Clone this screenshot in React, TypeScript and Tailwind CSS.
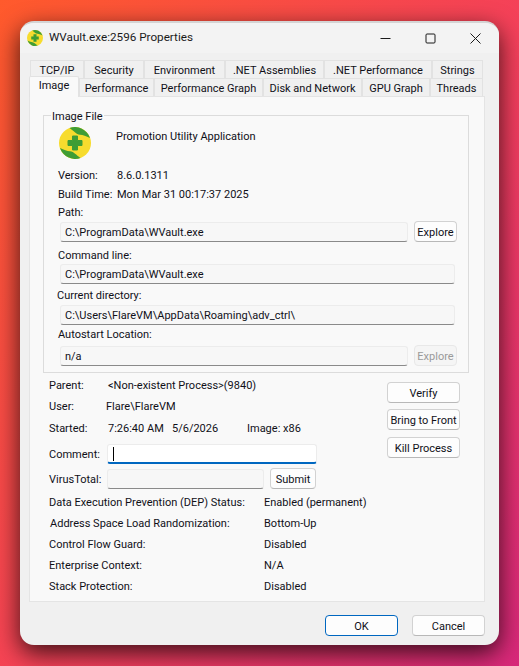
import React from 'react'

const row1 = [
  { label: 'TCP/IP', w: 'w-[54px]' },
  { label: 'Security', w: 'w-[60px]' },
  { label: 'Environment', w: 'w-[81px]' },
  { label: '.NET Assemblies', w: 'w-[99px]' },
  { label: '.NET Performance', w: 'w-[108px]' },
  { label: 'Strings', w: 'w-[51px]' },
]

const row2 = [
  { label: 'Performance', w: 'w-[75px]' },
  { label: 'Performance Graph', w: 'w-[109px]' },
  { label: 'Disk and Network', w: 'w-[99px]' },
  { label: 'GPU Graph', w: 'w-[68px]' },
  { label: 'Threads', w: 'w-[53px]' },
]

const mitigations = [
  { label: 'Data Execution Prevention (DEP) Status:', value: 'Enabled (permanent)', cls: 'w-[215px]' },
  { label: 'Address Space Load Randomization:', value: 'Bottom-Up', cls: 'w-[214px] ml-px' },
  { label: 'Control Flow Guard:', value: 'Disabled', cls: 'w-[215px]' },
  { label: 'Enterprise Context:', value: 'N/A', cls: 'w-[215px]' },
  { label: 'Stack Protection:', value: 'Disabled', cls: 'w-[215px]' },
]

function AppIcon({ size }: { size: number }) {
  return (
    <svg width={size} height={size} viewBox="0 0 32 32">
      <circle cx="16" cy="16" r="16" fill="#f7dc2e" />
      <path d="M10.5 1A16 16 0 0 1 31 11C27 9 24 8 21 7.7C17 7.3 15 4 10.5 1Z" fill="#3f9d35" />
      <path d="M21.5 31A16 16 0 0 1 1 21C5 23 8 24 11 24.3C15 24.7 17 28 21.5 31Z" fill="#3f9d35" />
      <path d="M13.5 9H18.5V13.5H23V18.5H18.5V23H13.5V18.5H9V13.5H13.5Z" fill="#3f9d35" stroke="#3f9d35" strokeLinejoin="round" />
    </svg>
  )
}

function Field({ value, width }: { value: string; width: string }) {
  return (
    <div className={`${width} h-[20px] ml-[2px] shrink-0 bg-[#f7f7f7] border border-[#ececec] border-b-[#8a8a8a] rounded-[3px] pl-[4px] leading-[20px] whitespace-nowrap`}>
      {value}
    </div>
  )
}

function Btn({ label, width, disabled }: { label: string; width: string; disabled?: boolean }) {
  return (
    <div className={`${width} h-[21px] pt-[3px] shrink-0 flex items-center justify-center rounded-[4px] border whitespace-nowrap ${disabled ? 'bg-[#f5f5f5] border-[#e8e8e8] text-[#9a9a9a]' : 'bg-[#fdfdfd] border-[#d2d2d2] border-b-[#b8b8b8]'}`}>
      {label}
    </div>
  )
}

export default function App() {
  return (
    <div className="w-[519px] h-[666px] overflow-hidden pt-[21px] pl-[20px] bg-[linear-gradient(125deg,#ff5a2c_0%,#f4405a_55%,#d8287a_100%)] font-['Roboto','Open_Sans',sans-serif] text-[11px] text-[#101018]">
      <div className="w-[479px] h-[624px] rounded-[14px] bg-[#f0f0f0] border-t-2 border-[#d4d4d4] shadow-[0_8px_24px_rgba(0,0,0,0.75)] overflow-hidden">
        {/* Title bar */}
        <div className="h-[30px] flex items-center pl-[7px] bg-[#f3f3f3]">
          <AppIcon size={16} />
          <span className="ml-[6px] text-[11.7px] text-[#1a1a1a] -mt-[1px]">WVault.exe:2596 Properties</span>
          <div className="ml-auto flex items-center gap-[34px] pr-[18px] text-[#1a1a1a]">
            <svg width="11" height="11" viewBox="0 0 11 11"><path d="M0.5 5.5H10.5" stroke="currentColor" /></svg>
            <svg width="11" height="11" viewBox="0 0 11 11"><rect x="1" y="1" width="9" height="9" rx="1" fill="none" stroke="currentColor" /></svg>
            <svg width="11" height="11" viewBox="0 0 11 11"><path d="M0.5 0.5L10.5 10.5M10.5 0.5L0.5 10.5" stroke="currentColor" /></svg>
          </div>
        </div>

        <div className="pl-[9px] pt-[7px]">
          {/* Tabs */}
          <div className="flex pl-px h-[18px]">
            {row1.map(t => (
              <div key={t.label} className={`${t.w} h-[18px] pt-[3px] flex items-center justify-center bg-[#f0f0f0] border border-b-0 border-[#e2e2e2] whitespace-nowrap`}>
                {t.label}
              </div>
            ))}
          </div>
          <div className="flex h-[18px] items-end">
            <div className="w-[50px] h-[21px] -mt-[3px] pb-[1px] flex items-center justify-center bg-[#f9f9f9] border border-b-0 border-[#e2e2e2] rounded-t-[2px] relative z-10 -mb-px">
              Image
            </div>
            {row2.map(t => (
              <div key={t.label} className={`${t.w} h-[18px] pt-[3px] flex items-center justify-center bg-[#f0f0f0] border border-b-0 border-[#e2e2e2] whitespace-nowrap`}>
                {t.label}
              </div>
            ))}
          </div>

          {/* Page */}
          <div className="w-[456px] h-[506px] bg-[#f9f9f9] border border-[#e4e4e4] pl-[13px] pt-[18px]">
            <div className="relative w-[426px] h-[258px] border border-[#dcdcdc] pl-[14px]">
              <span className="absolute left-[7px] -top-[6px] px-[1px] bg-[#f9f9f9] leading-[14px]">Image File</span>
              <div className="flex h-[44px] pt-[11px]">
                <div className="ml-px"><AppIcon size={32} /></div>
                <span className="ml-[25px] mt-[2px] leading-[16px]">Promotion Utility Application</span>
              </div>
              <div className="flex h-[19px] mt-[5px] pt-[4px] items-center"><span className="w-[59px] shrink-0 whitespace-nowrap">Version:</span><span>8.6.0.1311</span></div>
              <div className="flex h-[19px] pt-[4px] items-center"><span className="w-[59px] shrink-0 whitespace-nowrap">Build Time:</span><span>Mon Mar 31 00:17:37 2025</span></div>
              <div className="h-[16px] leading-[18px] mt-[1px]">Path:</div>
              <div className="flex h-[21px] items-center gap-[6px] mt-[1px]">
                <Field value="C:\ProgramData\WVault.exe" width="w-[348px]" />
                <Btn label="Explore" width="w-[43px]" />
              </div>
              <div className="h-[16px] leading-[18px] mt-[5px]">Command line:</div>
              <div className="mt-px"><Field value="C:\ProgramData\WVault.exe" width="w-[395px]" /></div>
              <div className="h-[16px] leading-[18px] mt-[3px] -ml-px">Current directory:</div>
              <div className="mt-[2px]"><Field value="C:\Users\FlareVM\AppData\Roaming\adv_ctrl\" width="w-[395px]" /></div>
              <div className="h-[16px] leading-[18px] mt-[1px]">Autostart Location:</div>
              <div className="flex h-[21px] items-center gap-[6px] mt-[3px]">
                <Field value="n/a" width="w-[348px]" />
                <Btn label="Explore" width="w-[43px]" disabled />
              </div>
            </div>

            {/* Process details */}
            <div className="flex mt-[1px] ml-[6px] h-[224px]">
              <div className="w-[338px]">
                <div className="flex h-[21px] pt-[4px] items-center"><span className="w-[59px]">Parent:</span><span>&lt;Non-existent Process&gt;(9840)</span></div>
                <div className="flex h-[21px] pt-[4px] items-center"><span className="w-[57px]">User:</span><span>Flare\FlareVM</span></div>
                <div className="flex h-[22px] mt-px pt-[2px] items-center">
                  <span className="w-[59px]">Started:</span>
                  <span className="w-[64px]">7:26:40 AM</span>
                  <span className="w-[75px]">5/6/2026</span>
                  <span>Image: x86</span>
                </div>
                <div className="flex h-[20px] mt-[5px] items-center">
                  <span className="w-[58px] mt-[2px]">Comment:</span>
                  <div className="w-[210px] h-[20px] bg-white border border-[#ececec] border-b-2 border-b-[#0067c0] rounded-[3px] flex items-center pl-[5px]">
                    <div className="w-px h-[14px] bg-black" />
                  </div>
                </div>
                <div className="flex h-[21px] mt-[4px] items-center">
                  <span className="w-[58px] mt-[4px]">VirusTotal:</span>
                  <div className="w-[157px] h-[20px] bg-[#f7f7f7] border border-[#ececec] border-b-[#8a8a8a] rounded-[3px]" />
                  <div className="ml-[6px]"><Btn label="Submit" width="w-[46px]" /></div>
                </div>
                <div className="mt-[2px]">
                  {mitigations.map(m => (
                    <div key={m.label} className="flex h-[21px] pt-[4px] items-center">
                      <span className={`shrink-0 whitespace-nowrap ${m.cls}`}>{m.label}</span>
                      <span className="whitespace-nowrap">{m.value}</span>
                    </div>
                  ))}
                </div>
              </div>
              <div className="flex flex-col mt-[8px]">
                <Btn label="Verify" width="w-[73px]" />
                <div className="mt-[6px]"><Btn label="Bring to Front" width="w-[73px]" /></div>
                <div className="mt-[7px]"><Btn label="Kill Process" width="w-[73px]" /></div>
              </div>
            </div>
          </div>

          {/* Dialog buttons */}
          <div className="flex justify-end gap-[14px] mt-[13px] pr-[14px]">
            <div className="w-[73px] h-[21px] pt-[3px] flex items-center justify-center bg-[#fdfdfd] border border-[#0067c0] rounded-[4px]">OK</div>
            <Btn label="Cancel" width="w-[73px]" />
          </div>
        </div>
      </div>
    </div>
  )
}
